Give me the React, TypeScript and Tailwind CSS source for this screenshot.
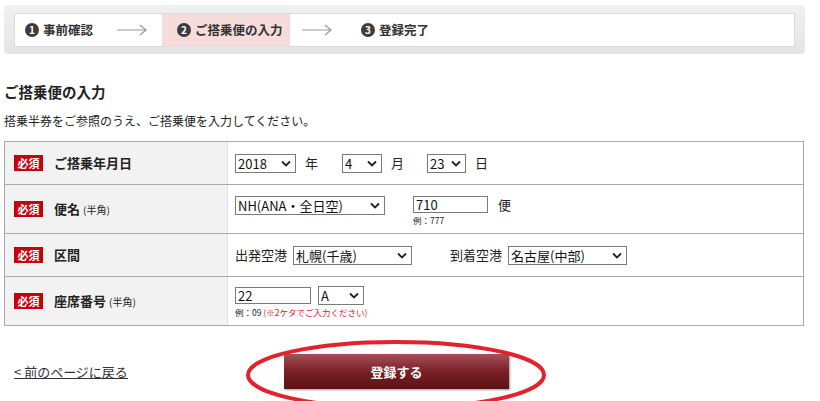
import React from "react";

const font = { fontFamily: '"Noto Sans CJK JP", "Noto Sans", sans-serif' };

function Circle({ n }: { n: string }) {
  return (
    <span className="flex h-[14px] w-[14px] items-center justify-center rounded-full bg-[#3c3c3c] text-[10px] font-bold leading-none text-white">
      {n}
    </span>
  );
}

function Arrow() {
  return (
    <svg width="31" height="12" viewBox="0 0 31 12" className="block">
      <path d="M0 6 H29 M23 1 L29 6 L23 11" fill="none" stroke="#9a9a9a" strokeWidth="1.2" />
    </svg>
  );
}

function Badge() {
  return (
    <span className="flex h-[16px] w-[29px] items-center justify-center bg-[#c5000f] text-[11px] font-bold leading-none text-white">
      必須
    </span>
  );
}

function Select({ value, w }: { value: string; w: string }) {
  return (
    <div className={`flex h-[19px] items-center justify-between border border-[#7a7a7a] bg-white pl-[2px] pr-[4px] ${w}`}>
      <span className="text-[13px] leading-none text-[#111]">{value}</span>
      <svg width="10" height="7" viewBox="0 0 10 7">
        <path d="M1 1.5 L5 5.5 L9 1.5" fill="none" stroke="#222" strokeWidth="1.8" />
      </svg>
    </div>
  );
}

function Input({ value, w }: { value: string; w: string }) {
  return (
    <div className={`flex h-[17px] items-center border border-[#7a7a7a] bg-white pl-[2px] ${w}`}>
      <span className="text-[13px] leading-none text-[#111]">{value}</span>
    </div>
  );
}

function Row({
  label,
  sub,
  h,
  children,
  last,
}: {
  label: string;
  sub?: string;
  h: string;
  children: React.ReactNode;
  last?: boolean;
}) {
  return (
    <div className={`flex ${h} ${last ? "" : "border-b border-[#a9a9a9]"}`}>
      <div className="flex w-[223px] items-center gap-[11px] border-r border-[#e2e2e2] bg-[#f2f2f2] pl-[9px]">
        <Badge />
        <span className="text-[13px] font-bold text-[#222]">
          {label}
          {sub && <span className="ml-[3px] text-[10px] font-normal">{sub}</span>}
        </span>
      </div>
      <div className="flex flex-1 items-center pl-[7px] text-[13px] text-[#222]">{children}</div>
    </div>
  );
}

export default function App() {
  return (
    <div className="relative h-[401px] w-[820px] overflow-hidden bg-white text-[#222]" style={font}>
      {/* step bar */}
      <div className="ml-[4px] mt-[5px] h-[49px] w-[801px] rounded-[4px] bg-gradient-to-b from-[#f1f1f1] to-[#e5e5e5] px-[10px] pt-[8px]">
        <div className="flex h-[34px] items-stretch border border-[#dcdcdc] bg-white">
          <div className="flex items-center pl-[10px]">
            <Circle n="1" />
            <span className="ml-[4px] text-[12.5px] font-semibold text-[#333]">事前確認</span>
            <span className="ml-[24px]">
              <Arrow />
            </span>
          </div>
          <div className="ml-[14px] flex w-[128px] items-center bg-[#f7dcdc] pl-[15px]">
            <Circle n="2" />
            <span className="ml-[4px] text-[12.5px] font-semibold text-[#333]">ご搭乗便の入力</span>
          </div>
          <div className="flex items-center pl-[12px]">
            <Arrow />
            <span className="ml-[28px]">
              <Circle n="3" />
            </span>
            <span className="ml-[4px] text-[12.5px] font-semibold text-[#333]">登録完了</span>
          </div>
        </div>
      </div>

      {/* heading */}
      <h1 className="ml-[4px] mt-[29px] text-[14.5px] font-bold leading-[18px] text-[#222]">ご搭乗便の入力</h1>
      <p className="ml-[4px] mt-[13px] text-[12px] leading-[14px] text-[#222]">
        搭乗半券をご参照のうえ、ご搭乗便を入力してください。
      </p>

      {/* table */}
      <div className="ml-[4px] mt-[13px] w-[800px] border border-[#a9a9a9]">
        <Row label="ご搭乗年月日" h="h-[43px]">
          <Select value="2018" w="w-[61px]" />
          <span className="ml-[9px]">年</span>
          <span className="ml-[24px]">
            <Select value="4" w="w-[40px]" />
          </span>
          <span className="ml-[9px]">月</span>
          <span className="ml-[23px]">
            <Select value="23" w="w-[39px]" />
          </span>
          <span className="ml-[9px]">日</span>
        </Row>
        <Row label="便名" sub="(半角)" h="h-[49px]">
          <div className="flex items-start pt-[2px]">
            <Select value="NH(ANA・全日空)" w="w-[150px]" />
            <div className="ml-[28px] flex flex-col">
              <Input value="710" w="w-[75px]" />
              <span className="mt-[3px] text-[8.5px] leading-none">例：777</span>
            </div>
            <span className="ml-[10px] leading-[17px]">便</span>
          </div>
        </Row>
        <Row label="区間" h="h-[43px]">
          <span>出発空港</span>
          <span className="ml-[6px]">
            <Select value="札幌(千歳)" w="w-[119px]" />
          </span>
          <span className="ml-[38px]">到着空港</span>
          <span className="ml-[6px]">
            <Select value="名古屋(中部)" w="w-[119px]" />
          </span>
        </Row>
        <Row label="座席番号" sub="(半角)" h="h-[48px]" last>
          <div className="flex flex-col pt-[1px]">
            <div className="flex items-center">
              <Input value="22" w="w-[76px]" />
              <span className="ml-[7px]">
                <Select value="A" w="w-[46px]" />
              </span>
            </div>
            <span className="mt-[3px] text-[8.5px] leading-none">
              例：09 <span className="text-[#d4232b]">(※2ケタでご入力ください)</span>
            </span>
          </div>
        </Row>
      </div>

      {/* bottom */}
      <div className="mt-[28px] flex items-center">
        <a className="ml-[14px] w-[270px] text-[13px] text-[#333] underline" href="#">
          &lt; 前のページに戻る
        </a>
        <button className="h-[35px] w-[225px] bg-gradient-to-b from-[#a6505a] via-[#7a1f26] to-[#5a1414] text-[13px] font-bold text-white shadow-[1px_1px_2px_rgba(0,0,0,0.4)]">
          登録する
        </button>
      </div>

      {/* red ellipse annotation */}
      <svg className="pointer-events-none absolute left-[244px] top-[338px]" width="304" height="80" viewBox="0 0 304 80">
        <ellipse cx="152" cy="37" rx="148" ry="33" fill="none" stroke="#e4222b" strokeWidth="4" />
      </svg>
    </div>
  );
}
